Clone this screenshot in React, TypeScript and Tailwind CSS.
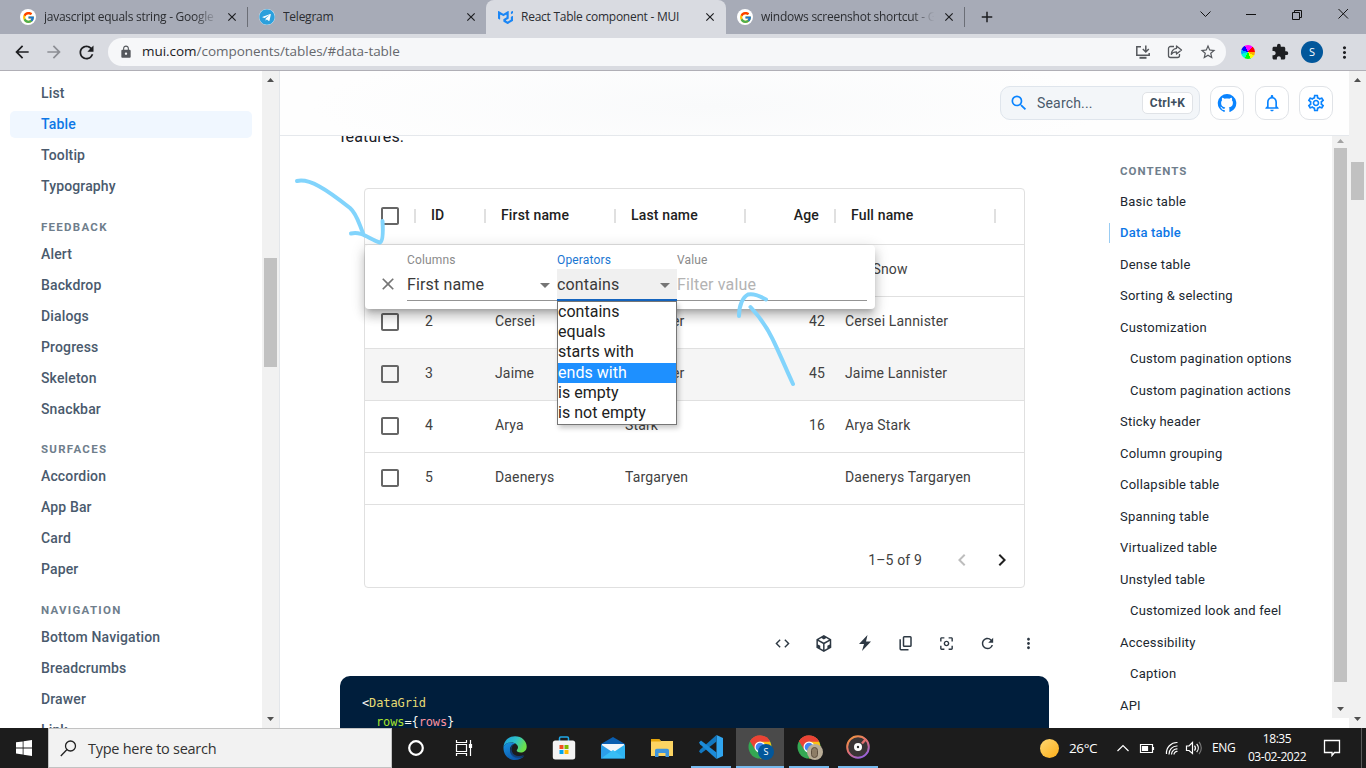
import React from "react";
import { FcGoogle } from "react-icons/fc";
import { SiMui } from "react-icons/si";
import { FaTelegram } from "react-icons/fa";
import {
  MdArrowBack,
  MdArrowForward,
  MdRefresh,
  MdLock,
  MdStarBorder,
  MdExtension,
  MdMoreVert,
  MdSearch,
  MdNotificationsNone,
  MdOutlineSettings,
  MdClose,
  MdArrowDropDown,
  MdCheckBoxOutlineBlank,
  MdKeyboardArrowLeft,
  MdKeyboardArrowRight,
  MdCode,
  MdCenterFocusWeak,
  MdAdd,
} from "react-icons/md";

const ui = "font-['Open_Sans','Noto_Sans',sans-serif]";
const plex = "font-['Roboto','Noto_Sans',sans-serif]";

/* ---------- browser chrome ---------- */

function GoogleBadge() {
  return (
    <span className="flex size-4 shrink-0 items-center justify-center rounded-full bg-white">
      <FcGoogle size={13} />
    </span>
  );
}

function Tab({ icon, title, active, fade }: { icon: React.ReactNode; title: string; active?: boolean; fade?: boolean }) {
  return (
    <div
      className={
        active
          ? "flex h-[34px] w-[240px] items-center rounded-t-lg bg-[#d9dbe1] pl-3 pr-[9px]"
          : "flex h-[34px] w-[239px] items-center pl-[11px] pr-[9px]"
      }
    >
      {icon}
      <span
        className={`ml-2 min-w-0 flex-1 overflow-hidden whitespace-nowrap text-[12px] tracking-[-0.25px] text-[#2b2d31] ${
          fade ? "[mask-image:linear-gradient(to_right,black_85%,transparent_98%)]" : ""
        }`}
      >
        {title}
      </span>
      <MdClose size={14} className="ml-1 shrink-0 text-[#1d1e21]" />
    </div>
  );
}

function TabStrip() {
  return (
    <div className={`flex h-[34px] shrink-0 items-center bg-[#a7abb7] ${ui}`}>
      <div className="flex w-[247px] pl-[9px]">
        <Tab icon={<GoogleBadge />} title="javascript equals string - Google Search" fade />
      </div>
      <div className="h-5 w-px bg-[#6b6e76]" />
      <Tab
        icon={
          <span className="flex size-4 shrink-0 items-center justify-center rounded-full bg-white">
            <FaTelegram size={16} className="text-[#2ca0dc]" />
          </span>
        }
        title="Telegram"
      />
      <div className="ml-[-1px]">
        <Tab active icon={<SiMui size={15} className="shrink-0 text-[#1a86f5]" />} title="React Table component - MUI" />
      </div>
      <div className="w-[238px]">
        <Tab icon={<GoogleBadge />} title="windows screenshot shortcut - Google Search" fade />
      </div>
      <div className="h-5 w-px bg-[#6b6e76]" />
      <MdAdd size={18} className="ml-[13px] text-[#1d1e21]" />
      <svg className="ml-auto mr-[17px] mb-[6px]" width="149" height="12" viewBox="0 0 149 12" fill="none" stroke="#111">
        <path d="M.5 3.5l5 5 5-5M46 6.500h10" />
        <path d="M92.500 4.500h7v7h-7zM94.500 4.500v-2h7v7h-2M138.500 1l9.500 9.500M148 1l-9.500 9.500" />
      </svg>
    </div>
  );
}

function Toolbar() {
  return (
    <div className={`flex h-[37px] shrink-0 items-center border-b border-[#b0afb6] bg-[#d9dbe1] ${ui}`}>
      <MdArrowBack size={20} className="ml-3 text-[#1d1e21]" />
      <MdArrowForward size={20} className="ml-3 text-[#8c8e94]" />
      <MdRefresh size={21} className="ml-[12px] text-[#1d1e21]" />
      <div className="ml-[11px] flex h-7 w-[1118px] items-center rounded-full bg-[#f6f7f9] pl-[11px] pr-[9px]">
        <MdLock size={14} className="text-[#55585d]" />
        <span className="ml-[9px] pb-px text-[13.5px] tracking-[-0.04px] text-[#202124]">
          mui.com<span className="text-[#65686d]">/components/tables/#data-table</span>
        </span>
        <svg className="ml-auto" width="16" height="16" viewBox="0 0 16 16" fill="none" stroke="#55585d" strokeWidth="1.500">
          <path d="M6 2.700H1.800v8.600h12.400V9" />
          <path d="M4.500 13.800h7" strokeWidth="2" />
          <path d="M10.800 1.500v6M7.800 5l3 3 3-3" />
        </svg>
        <svg className="ml-[16px]" width="16" height="16" viewBox="0 0 16 16" fill="none" stroke="#55585d" strokeWidth="1.300">
          <path d="M7 2.500H3.500a2 2 0 00-2 2v7a2 2 0 002 2h7a2 2 0 002-2V10" />
          <path d="M9.500 2l5 4-5 4V7.800C7 7.800 5.300 8.600 4.300 10.400 4.500 7 6.500 4.800 9.500 4.300z" strokeLinejoin="round" />
        </svg>
        <MdStarBorder size={18} className="ml-[16px] text-[#55585d]" />
      </div>
      <span className="ml-[15px] size-[14px] rounded-full bg-[conic-gradient(#f0f_0_12%,#f00_12%_24%,#fa0_24%_34%,#ff0_34%_44%,#0f0_44%_58%,#0fc_58%_70%,#0af_70%_80%,#00f_80%_92%,#f0f_92%)]" />
      <MdExtension size={18} className="ml-[16px] text-[#1d1e21]" />
      <span className="ml-[12px] flex size-[22px] items-center justify-center rounded-full bg-[#02579b] text-[11px] text-white">S</span>
      <MdMoreVert size={19} className="ml-[12px] text-[#1d1e21]" />
    </div>
  );
}

/* ---------- scrollbars ---------- */

function Arrow({ up, dim }: { up?: boolean; dim?: boolean }) {
  return (
    <svg width="7" height="4" viewBox="0 0 7 4" className={dim ? "shrink-0 text-[#a3a3a3]" : "shrink-0 text-[#505050]"}>
      <path d={up ? "M0 4h7L3.500 0z" : "M0 0h7L3.500 4z"} fill="currentColor" />
    </svg>
  );
}

/* ---------- sidebar ---------- */

const nav: { title?: string; items: string[] }[] = [
  { items: ["List", "Table", "Tooltip", "Typography"] },
  { title: "FEEDBACK", items: ["Alert", "Backdrop", "Dialogs", "Progress", "Skeleton", "Snackbar"] },
  { title: "SURFACES", items: ["Accordion", "App Bar", "Card", "Paper"] },
  { title: "NAVIGATION", items: ["Bottom Navigation", "Breadcrumbs", "Drawer", "Link"] },
];

function Sidebar() {
  return (
    <div className={`flex w-[280px] shrink-0 overflow-hidden border-r border-[#e3e6ea] bg-white ${plex}`}>
      <div className="h-0 flex-1 pl-[10px] pr-[10px] pt-[7px]">
        {nav.map((g, i) => (
          <div key={i}>
            {g.title && (
              <div className="flex h-[36.5px] items-center pt-[14px] pl-[31px] text-[11.5px] font-bold tracking-[1.28px] text-[#6f7e8c]">
                {g.title}
              </div>
            )}
            {g.items.map((t) => (
              <div key={t} className="h-[31px] py-[2px]">
                <div
                  className={`flex h-[27px] items-center rounded-[5px] pl-[31px] text-[14px] font-medium tracking-[0.14px] ${
                    t === "Table" ? "bg-[#f0f7ff] text-[#0d77e6]" : "text-[#4a5a6d]"
                  }`}
                >
                  {t}
                </div>
              </div>
            ))}
          </div>
        ))}
      </div>
      <div className="flex w-[17px] flex-col items-center bg-[#f1f1f1] pt-[7px] pb-[7px]">
        <Arrow up />
        <div className="mt-[176px] h-[109px] w-[13px] bg-[#c1c1c1]" />
        <div className="mt-auto flex">
          <Arrow />
        </div>
      </div>
    </div>
  );
}

/* ---------- docs header ---------- */

function IconButton({ children }: { children: React.ReactNode }) {
  return (
    <div className="flex size-[34px] items-center justify-center rounded-[10px] border border-[#e0e3e7] bg-white text-[#0a84ff]">{children}</div>
  );
}

function DocsHeader() {
  return (
    <div className="flex h-[65px] shrink-0 items-center border-b border-[#e5e8ec] bg-[radial-gradient(ellipse_400px_60px_at_430px_35px,#f9fafb,#fefefe)] pr-4">
      <div className={`ml-auto flex h-[34px] w-[200px] items-center rounded-[10px] border border-[#dfe5ec] bg-[#f3f6f9] pl-[8px] pr-[6px] ${plex}`}>
        <MdSearch size={20} className="text-[#0a84ff]" />
        <span className="ml-[8px] text-[14px] tracking-[0.18px] text-[#4a5a6b]">Search...</span>
        <span className="ml-auto flex h-[22px] w-[51px] items-center justify-center rounded-[5px] border border-[#e0e3e7] bg-white text-[12px] font-bold tracking-[0.3px] text-[#3e5060]">
          Ctrl+K
        </span>
      </div>
      <div className="ml-[10px] flex gap-[10.5px]">
        <IconButton>
          <svg width="20" height="20" viewBox="0 0 24 24" fill="currentColor">
            <path d="M12 1.270a11 11 0 00-3.480 21.460c.55.09.73-.28.73-.55v-1.840c-3.030.64-3.670-1.460-3.670-1.460-.55-1.290-1.280-1.650-1.280-1.650-.92-.65.1-.65.1-.65 1.100 0 1.730 1.100 1.730 1.100.92 1.650 2.570 1.200 3.210.92a2 2 0 01.64-1.470c-2.470-.27-5.040-1.190-5.040-5.500 0-1.100.46-2.100 1.200-2.840a3.760 3.760 0 010-2.930s.91-.28 3.110 1.100c1.800-.49 3.700-.49 5.500 0 2.100-1.380 3.020-1.100 3.020-1.100a3.760 3.760 0 01.1 2.930c.83.74 1.200 1.740 1.200 2.940 0 4.210-2.570 5.130-5.040 5.400.45.37.82.92.82 2.020v3.030c0 .27.1.64.73.55A11 11 0 0012 1.270" />
          </svg>
        </IconButton>
        <IconButton>
          <MdNotificationsNone size={20} />
        </IconButton>
        <IconButton>
          <MdOutlineSettings size={20} />
        </IconButton>
      </div>
    </div>
  );
}

/* ---------- data grid ---------- */

const cols = "grid grid-cols-[50px_70px_130px_130px_90px_160px_1fr]";

const rows = [
  { id: "1", first: "Jon", last: "Snow", age: "35", full: "Jon Snow" },
  { id: "2", first: "Cersei", last: "Lannister", age: "42", full: "Cersei Lannister" },
  { id: "3", first: "Jaime", last: "Lannister", age: "45", full: "Jaime Lannister" },
  { id: "4", first: "Arya", last: "Stark", age: "16", full: "Arya Stark" },
  { id: "5", first: "Daenerys", last: "Targaryen", age: "", full: "Daenerys Targaryen" },
];

function HeadCell({ children, right }: { children?: React.ReactNode; right?: boolean }) {
  return (
    <div className="flex h-full items-center pl-4">
      <span className={right ? "ml-auto mr-[15px] pb-[3px]" : "mr-auto pb-[3px]"}>{children}</span>
      <span className="-mr-px mb-[2px] h-[14px] w-[2px] bg-[#e0e0e0]" />
    </div>
  );
}

function FilterPanel() {
  return (
    <div className="absolute left-0 top-[56px] flex h-[64px] w-[510px] rounded-[4px] bg-white pr-2 text-[16px] tracking-[0.15px] shadow-[0_5px_5px_-3px_rgba(0,0,0,0.2),0_8px_10px_1px_rgba(0,0,0,0.14),0_3px_14px_2px_rgba(0,0,0,0.12)]">
      <div className="flex w-[42px] items-end justify-center pb-[15px] pl-[4px] text-[#757575]">
        <MdClose size={20} />
      </div>
      <div className="flex w-[150px] flex-col pt-[7px]">
        <span className="text-[12px] leading-4 text-[#8a8a8a]">Columns</span>
        <div className="mt-px flex h-[32px] items-center border-b border-[#949494] text-[#3a3a3a]">
          First name
          <MdArrowDropDown size={24} className="ml-auto text-[#757575]" />
        </div>
      </div>
      <div className="relative flex w-[120px] flex-col pt-[7px]">
        <span className="text-[12px] leading-4 text-[#1976d2]">Operators</span>
        <div className="mt-px flex h-[32px] items-center border-b-2 border-[#1565c0] bg-[#f0f0f0] pt-px text-[#3a3a3a]">
          contains
          <MdArrowDropDown size={24} className="ml-auto text-[#757575]" />
        </div>
        <div className="absolute left-0 top-[56px] z-10 flex h-[124px] w-[120px] flex-col border border-[#767676] bg-white pb-px tracking-[0.03px] text-[#212121] shadow-[2px_3px_5px_rgba(0,0,0,0.22)]">
          {["contains", "equals", "starts with", "ends with", "is empty", "is not empty"].map((o) => (
            <div
              key={o}
              className={`flex min-h-0 flex-1 items-center leading-[20px] ${o === "ends with" ? "bg-[#1e90ff] text-white" : ""}`}
            >
              {o}
            </div>
          ))}
        </div>
      </div>
      <div className="flex w-[190px] flex-col pt-[7px]">
        <span className="text-[12px] leading-4 text-[#8a8a8a]">Value</span>
        <div className="mt-px flex h-[32px] items-center border-b border-[#949494] text-[#b3b3b3]">Filter value</div>
      </div>
    </div>
  );
}

function DataGrid() {
  return (
    <div className="relative ml-[84px] mt-[52px] flex h-[400px] w-[661px] shrink-0 flex-col rounded-[4px] border border-[#e0e0e0] font-['Roboto',sans-serif] text-[14px] tracking-[0.15px] text-[#414141]">
      <div className={`${cols} h-[56px] shrink-0 items-center border-b border-[#e0e0e0] font-medium text-[#212121]`}>
        <div className="flex h-full items-center pl-[13px]">
          <MdCheckBoxOutlineBlank size={24} className="mb-[2px] text-[#666]" />
          <span className="-mr-px mb-[2px] ml-auto h-[14px] w-[2px] bg-[#e0e0e0]" />
        </div>
        <HeadCell>ID</HeadCell>
        <HeadCell>First name</HeadCell>
        <HeadCell>Last name</HeadCell>
        <HeadCell right>Age</HeadCell>
        <HeadCell>Full name</HeadCell>
      </div>
      {rows.map((r) => (
        <div
          key={r.id}
          className={`${cols} h-[52px] shrink-0 items-center border-b border-[#e0e0e0] ${r.id === "3" ? "bg-[#f5f5f5]" : ""}`}
        >
          <MdCheckBoxOutlineBlank size={24} className="mb-[2px] ml-[13px] text-[#666]" />
          <span className="px-[10px] pb-[3px]">{r.id}</span>
          <span className="px-[10px] pb-[3px]">{r.first}</span>
          <span className="px-[10px] pb-[3px]">{r.last}</span>
          <span className="px-[10px] pb-[3px] text-right">{r.age}</span>
          <span className="px-[10px] pb-[3px]">{r.full}</span>
        </div>
      ))}
      <div className="mt-auto flex h-[54px] items-center justify-end pr-[10px]">
        <span>1–5 of 9</span>
        <MdKeyboardArrowLeft size={24} className="ml-[28px] text-[#bdbdbd]" />
        <MdKeyboardArrowRight size={24} className="ml-[16px] text-[#212121]" />
      </div>
      <FilterPanel />
    </div>
  );
}

function DemoToolbar() {
  return (
    <div className="ml-[482px] mt-[43px] flex h-[24px] w-[270px] shrink-0 text-[#2d3843] [&>span]:flex [&>span]:w-[41px] [&>span]:shrink-0 [&>span]:items-center [&>span]:justify-center">
      <span>
        <MdCode size={17} />
      </span>
      <span>
        <svg width="17" height="17" viewBox="0 0 24 24" fill="currentColor">
          <path d="M2 6l10.455-6L22.910 6 23 17.950 12.455 24 2 18V6zm2.088 2.481v4.757l3.345 1.860v3.516l3.972 2.296v-8.272L4.088 8.481zm16.739 0l-7.317 4.157v8.272l3.972-2.296V15.100l3.345-1.861V8.480zM5.134 6.601l7.303 4.144 7.320-4.180-3.871-2.197-3.410 1.945-3.430-1.968L5.133 6.600z" />
        </svg>
      </span>
      <span>
        <svg width="12" height="16" viewBox="0 0 12 16" fill="currentColor">
          <path d="M8.500 0L0 9h5L3 16l9-9.500H7z" />
        </svg>
      </span>
      <span>
        <svg width="20" height="20" viewBox="0 0 24 24" fill="none" stroke="currentColor" strokeWidth="1.800">
          <rect x="9" y="4.500" width="9" height="11.500" rx="1" />
          <path d="M5 7.500V19a1 1 0 001 1H15" />
        </svg>
      </span>
      <span>
        <MdCenterFocusWeak size={17} />
      </span>
      <span>
        <MdRefresh size={17} />
      </span>
      <span>
        <MdMoreVert size={17} />
      </span>
    </div>
  );
}

function Article() {
  return (
    <div className={`flex h-full w-[829px] flex-col overflow-hidden ${plex}`}>
      <div className="-mt-[11px] mb-[-13px] ml-[60px] h-[24px] shrink-0 text-[16px] leading-6 tracking-[0.15px] text-[#1a2027]">features.</div>
      <DataGrid />
      <DemoToolbar />
      <div className="ml-[60px] mt-[21px] h-[80px] w-[709px] shrink-0 rounded-[10px] bg-[#001e3c] px-[22px] pt-[18px] font-['DejaVu_Sans_Mono',monospace] text-[12px] leading-[19px] tracking-[-0.12px] text-[#f8f8f2]">
        <div>
          &lt;<span className="text-[#e6db74]">DataGrid</span>
        </div>
        <div className="pl-[14px]">
          <span className="text-[#a6e22e]">rows</span>={"{"}
          <span className="text-[#fc929e]">rows</span>
          {"}"}
        </div>
      </div>
    </div>
  );
}

/* ---------- table of contents ---------- */

const toc: [string, boolean?][] = [
  ["Basic table"],
  ["Data table"],
  ["Dense table"],
  ["Sorting & selecting"],
  ["Customization"],
  ["Custom pagination options", true],
  ["Custom pagination actions", true],
  ["Sticky header"],
  ["Column grouping"],
  ["Collapsible table"],
  ["Spanning table"],
  ["Virtualized table"],
  ["Unstyled table"],
  ["Customized look and feel", true],
  ["Accessibility"],
  ["Caption", true],
  ["API"],
];

function Toc() {
  return (
    <div className={`flex-1 pt-[27px] ${plex}`}>
      <div className="flex h-[18px] items-center pl-[11px] text-[11.5px] font-bold tracking-[1.05px] text-[#6f7e8c]">CONTENTS</div>
      <div className="mt-[4.5px]">
        {toc.map(([t, sub]) => (
          <div key={t} className="flex h-[31.5px] items-center">
            <div
              className={`flex h-[20px] items-center whitespace-nowrap border-l text-[13px] ${
                sub ? "pl-[20px]" : "pl-[10px]"
              } ${
                t === "Data table"
                  ? "border-[#99ccf3] font-medium tracking-[0.2px] text-[#0d77e6]"
                  : "border-transparent tracking-[0.22px] text-[#20272f]"
              }`}
            >
              {t}
            </div>
          </div>
        ))}
      </div>
    </div>
  );
}

/* ---------- hand drawn arrows ---------- */

function Marks() {
  return (
    <svg className="pointer-events-none absolute left-0 top-0 z-20" width="1366" height="768" fill="none" stroke="#82d4fc" strokeWidth="4" strokeLinecap="round" strokeLinejoin="round">
      <path d="M297 181C309 178 326 189 350 208C357 214 359 224 363 233" />
      <path d="M351 233.500C362 231 369 239 380 242.500C383.500 241 383 229 382.500 221" />
      <path d="M739 316C739 305 743 297 748 294.500C754 293 760 296 766 299.500" />
      <path d="M750.500 307C767 325 770 334 774 342C783 361 786 369 793 384" />
    </svg>
  );
}

/* ---------- taskbar ---------- */

function ChromeIcon() {
  return (
    <svg width="24" height="24" viewBox="0 0 24 24">
      <circle cx="12" cy="12" r="11.500" fill="#34a853" />
      <path d="M12 12L2 6.300A11.500 11.500 0 0122 6.300z" fill="#ea4335" />
      <path d="M12 6.500h10A11.500 11.500 0 0112 23.500l5-8.600z" fill="#fbc116" />
      <path d="M2 6.300A11.500 11.500 0 0122 6.500H12L7 14.500z" fill="#ea4335" />
      <circle cx="12" cy="12" r="5.500" fill="#fff" />
      <circle cx="12" cy="12" r="4.300" fill="#4285f4" />
    </svg>
  );
}

function TaskItem({ children, open, active }: { children: React.ReactNode; open?: boolean; active?: boolean }) {
  return (
    <div className={`flex h-10 shrink-0 flex-col items-center ${active ? "ml-px w-[48px] bg-[#4a4a4a]" : "w-[49px]"}`}>
      <div className="flex min-h-0 flex-1 items-center">{children}</div>
      {open && <div className={active ? "h-[2px] w-full bg-[#76b9ed]" : "h-[2px] w-[40px] bg-[#76b9ed]"} />}
    </div>
  );
}

function Taskbar() {
  return (
    <div className={`flex h-10 shrink-0 bg-[#1c1c1c] text-white ${ui}`}>
      <div className="flex w-[48px] items-center pl-4">
        <svg width="16" height="16" viewBox="0 0 16 16" fill="#fff">
          <path d="M0 2.300l6.700-.9v6.100H0zM7.500 1.300L16 0v7.500H7.500zM0 8.400h6.700v6.100L0 13.600zM7.500 8.400H16V16l-8.500-1.300z" />
        </svg>
      </div>
      <div className="flex w-[344px] items-center border border-[#c2c2c2] bg-[#f2f2f2] pl-[11px]">
        <svg width="17" height="17" viewBox="0 0 17 17" fill="none" stroke="#222" strokeWidth="1.300">
          <circle cx="10.500" cy="6" r="5" />
          <path d="M7 9.500L.8 16" />
        </svg>
        <span className="ml-[11px] pt-px text-[14.5px] tracking-[-0.27px] text-[#333]">Type here to search</span>
      </div>
      <TaskItem>
        <svg className="mr-px" width="18" height="18" viewBox="0 0 18 18" fill="none" stroke="#fff" strokeWidth="2.200">
          <circle cx="9" cy="9" r="6.800" />
        </svg>
      </TaskItem>
      <TaskItem>
        <svg className="mr-[4px]" width="18" height="16" viewBox="0 0 18 16" fill="none" stroke="#fff" strokeWidth="1.200">
          <path d="M1.500 4.500h10v7h-10zM1.500 0v2.500h10V0M1.500 16v-2.500h10V16M15.500 0v16" />
          <path d="M14.500 4.500h2v3h-2z" fill="#fff" />
        </svg>
      </TaskItem>
      <TaskItem>
        <svg width="24" height="24" viewBox="0 0 24 24">
          <defs>
            <linearGradient id="edgeTop" x1="0" y1="0" x2="1" y2="0.400">
              <stop offset="0" stopColor="#1a9de0" />
              <stop offset=".55" stopColor="#2fc2c8" />
              <stop offset="1" stopColor="#6be04a" />
            </linearGradient>
            <linearGradient id="edgeLow" x1="0" y1="0" x2="0.600" y2="1">
              <stop offset="0" stopColor="#1794e2" />
              <stop offset="1" stopColor="#0c55a8" />
            </linearGradient>
          </defs>
          <path d="M.5 11C1 4.500 6 .3 12 .3c7 0 11.700 5 11.700 10.200 0 4-3 6-6 6-2.700 0-4-1-4-1.900 0-.8 1.300-1.300 1.300-3.300 0-2.600-3-4.800-6.500-4.800C4.500 6.500 1.500 8.500.5 11z" fill="url(#edgeTop)" />
          <path d="M.5 11c1-2.500 4-4.500 8-4.500 1.500 0 2.800.4 3.800 1C8 8.500 7 11.500 7 14c0 4.500 4 7.700 8.700 7.700 2.300 0 4.300-.8 5.800-2C19.500 22.300 16 24 12 24 5.500 24 0 18.700.5 11z" fill="url(#edgeLow)" />
          <path d="M12.300 7.500c-3.300 1.500-4.300 5-3.300 8 1.200 4 6 6 12 3.500-3 4-9 4-12 1S6.500 9 12.300 7.500z" fill="#0f4a94" opacity=".75" />
        </svg>
      </TaskItem>
      <TaskItem>
        <svg width="24" height="24" viewBox="0 0 24 24">
          <path d="M7.500 6V2.200c0-.7.500-1.200 1.200-1.200h6.600c.7 0 1.200.5 1.200 1.200V6" fill="none" stroke="#1fa8e8" strokeWidth="1.500" />
          <rect x=".8" y="4.500" width="22.400" height="19" rx="2.500" fill="#f3f3f3" />
          <path d="M7.500 9h4v4h-4z" fill="#f25022" />
          <path d="M12.500 9h4v4h-4z" fill="#7fba00" />
          <path d="M7.500 14h4v4h-4z" fill="#00a4ef" />
          <path d="M12.500 14h4v4h-4z" fill="#ffb900" />
        </svg>
      </TaskItem>
      <TaskItem>
        <svg width="24" height="24" viewBox="0 0 24 24">
          <path d="M0 8l12-7 12 7v14.500H0z" fill="#0a5eb0" />
          <path d="M1 8h22v4L12 18 1 12z" fill="#f2f6fa" />
          <path d="M0 8.500l12 8L0 22.500z" fill="#2c9ee8" />
          <path d="M24 8.500l-12 8 12 6z" fill="#2fb4f2" />
          <path d="M0 22.500L12 14l12 8.500z" fill="#38bdf6" />
        </svg>
      </TaskItem>
      <TaskItem>
        <svg width="22" height="20" viewBox="0 0 22 20">
          <path d="M0 1h8l2 2h12v15H0z" fill="#fcd462" />
          <path d="M0 1h8l2 2.500H0z" fill="#e5a50a" />
          <path d="M4 19v-6.500c0-1 .8-1.800 1.800-1.800h10.400c1 0 1.800.8 1.800 1.800V19h-3.500v-4h-7v4z" fill="#3e94dc" />
        </svg>
      </TaskItem>
      <TaskItem open>
        <svg width="24" height="24" viewBox="0 0 24 24">
          <path d="M17.500 0L24 3v18l-6.500 3z" fill="#30a5ef" />
          <path d="M17.500 0L1 14.800 0 16.500l2 2L17.500 6.500z" fill="#1177c0" />
          <path d="M17.500 24L1 9.200 0 7.500l2-2 15.500 12z" fill="#1c8bd8" />
        </svg>
      </TaskItem>
      <TaskItem open active>
        <span className="relative flex">
          <ChromeIcon />
          <span className="absolute left-[10px] top-[9px] flex size-[16px] items-center justify-center rounded-full bg-[#02579b] text-[9px]">S</span>
        </span>
      </TaskItem>
      <TaskItem open>
        <span className="relative flex">
          <ChromeIcon />
          <span className="absolute left-[10px] top-[9px] flex size-[16px] items-center justify-center rounded-full bg-[#b9ad97]">
            <span className="h-[11px] w-[7px] rounded-full border border-[#5e5140] bg-[#8d7d66]" />
          </span>
        </span>
      </TaskItem>
      <TaskItem open>
        <svg width="26" height="26" viewBox="0 0 26 26">
          <defs>
            <linearGradient id="disc" x1="0" y1="0" x2="0.600" y2="1">
              <stop offset="0" stopColor="#f59a3c" />
              <stop offset=".55" stopColor="#e2706f" />
              <stop offset="1" stopColor="#9a62d8" />
            </linearGradient>
          </defs>
          <circle cx="13" cy="13" r="10.800" fill="#3a3536" stroke="url(#disc)" strokeWidth="2" />
          <circle cx="13" cy="13" r="4" fill="#fff" />
          <circle cx="13" cy="13" r="1.200" fill="#333" />
          <path d="M17 9.500L21 5" stroke="#e2706f" strokeWidth="2.500" />
        </svg>
      </TaskItem>
      <div className="ml-auto flex items-center pr-[4px] text-[12px]">
        <span className="size-[19px] rounded-full bg-[linear-gradient(140deg,#ffd873,#fcae18)]" />
        <span className="ml-[10px] w-[30px] whitespace-nowrap text-[13.5px] tracking-[-0.4px]">26°C</span>
        <svg className="ml-[18px]" width="86" height="16" viewBox="0 0 86 16" fill="none" stroke="#fff" strokeWidth="1.200">
          <path d="M.5 11l5.500-5.500L11.500 11" />
          <path d="M23.500 4.500h12v8h-12zM36.500 7v3" />
          <path d="M25.500 6.500h5v4h-5z" fill="#fff" />
          <path d="M49.500 14A10.500 10.500 0 0160.500 2.500M52 14.500a8 8 0 018.500-8.500M54.500 14.500a5.500 5.500 0 016-5.500M57 14.500a3 3 0 013.500-3" />
          <path d="M69.500 6h2.500l3.500-3.500v11L72 10.500h-2.500z" />
          <path d="M77.500 5.500a4 4 0 010 5M79.700 3.800a6.500 6.500 0 010 8.400" />
          <path d="M82 2a9 9 0 010 12" stroke="#777" />
        </svg>
        <span className="ml-[9px] w-[25px] text-[12px] tracking-[-0.3px]">ENG</span>
        <div className="ml-[10px] w-[60px] whitespace-nowrap text-center text-[12px] leading-[18px] tracking-[-0.45px]">
          <div>18:35</div>
          <div>03-02-2022</div>
        </div>
        <svg className="ml-[16px]" width="18" height="18" viewBox="0 0 18 18" fill="none" stroke="#fff" strokeWidth="1.300">
          <path d="M1.500 1.500h15v12h-5l-2.500 3v-3H1.500z" />
        </svg>
        <span className="ml-[20px] h-10 w-px bg-[#5a5a5a]" />
      </div>
    </div>
  );
}

export default function App() {
  return (
    <div className="relative flex h-[768px] w-[1366px] flex-col overflow-hidden bg-white">
      <TabStrip />
      <Toolbar />
      <div className="flex h-[657px] shrink-0">
        <Sidebar />
        <div className="flex w-[1069px] flex-col">
          <DocsHeader />
          <div className="flex h-[592px]">
            <Article />
            <Toc />
            <div className="flex h-[582px] w-[17px] flex-col items-center bg-[#f1f1f1] pb-[7px] pt-[3px]">
              <Arrow up dim />
              <div className="mt-[5px] h-[534px] w-[13px] bg-[#c1c1c1]" />
              <div className="mt-auto flex">
                <Arrow />
              </div>
            </div>
          </div>
        </div>
        <div className="flex w-[17px] flex-col items-center bg-[#f1f1f1] pb-[7px] pt-[7px]">
          <Arrow up />
          <div className="mt-[80px] h-[38px] w-[13px] bg-[#c1c1c1]" />
          <div className="mt-auto flex">
            <Arrow />
          </div>
        </div>
      </div>
      <Taskbar />
      <Marks />
    </div>
  );
}
